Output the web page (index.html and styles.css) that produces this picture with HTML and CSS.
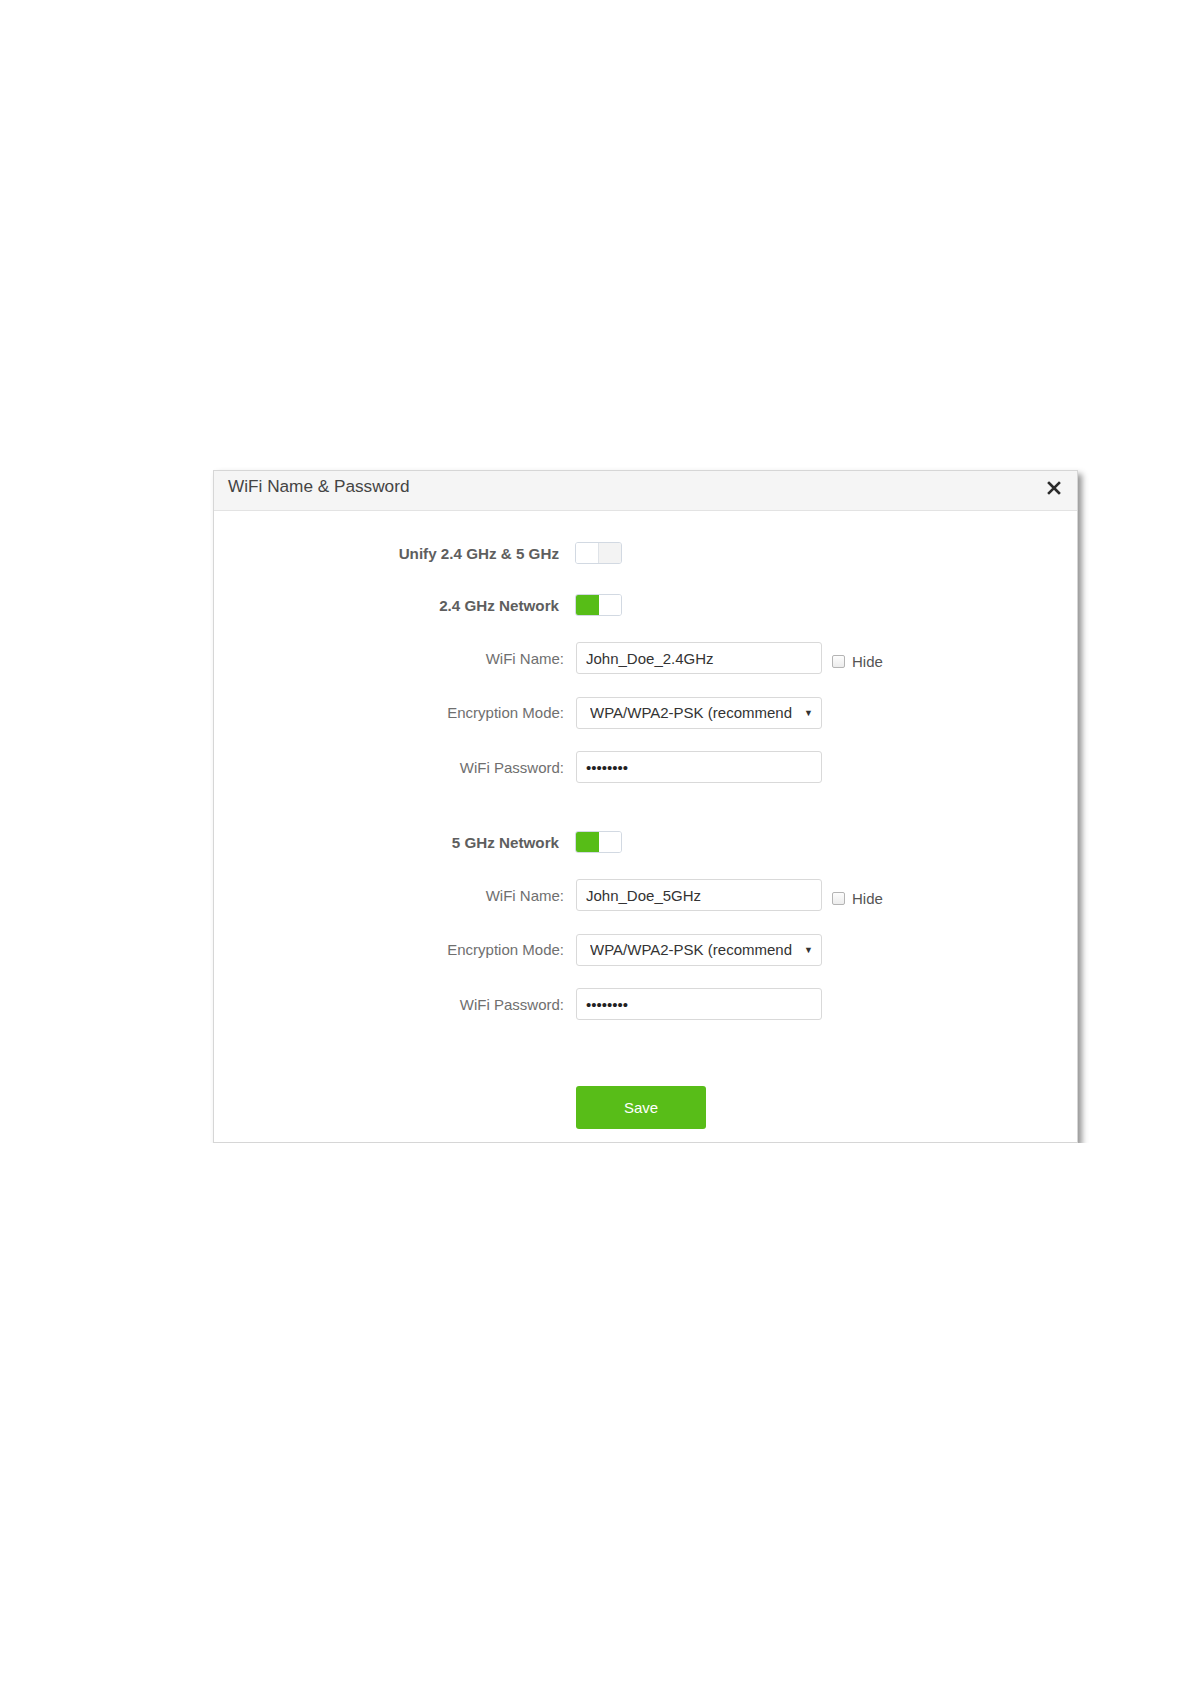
FILE: index.html
```html
<!DOCTYPE html>
<html>
<head>
<meta charset="utf-8">
<link rel="stylesheet" href="styles.css">
</head>
<body>
<div class="dialog">
  <div class="dialog-head">
    <span class="dialog-title">WiFi Name &amp; Password</span>
    <button class="close" type="button" aria-label="Close">
      <svg width="14" height="14" viewBox="0 0 14 14"><path d="M2 2 L12 12 M12 2 L2 12" stroke="#2b2b2b" stroke-width="2.6" stroke-linecap="square" fill="none"/></svg>
    </button>
  </div>
  <div class="dialog-body">
    <div class="row first">
      <label class="lbl bold">Unify 2.4 GHz &amp; 5 GHz</label>
      <span class="toggle off"><span class="half a"></span><span class="half b"></span></span>
    </div>
    <div class="row second">
      <label class="lbl bold">2.4 GHz Network</label>
      <span class="toggle on"><span class="half a"></span><span class="half b"></span></span>
    </div>
    <div class="row tight">
      <label class="lbl">WiFi Name:</label>
      <input class="field" type="text" value="John_Doe_2.4GHz">
      <label class="hide"><span class="cbox"></span>Hide</label>
    </div>
    <div class="row">
      <label class="lbl">Encryption Mode:</label>
      <div class="field select"><span class="sel-text">WPA/WPA2-PSK (recommend</span><span class="arrow">▼</span></div>
    </div>
    <div class="row">
      <label class="lbl">WiFi Password:</label>
      <input class="field pwd" type="text" value="••••••••">
    </div>

    <div class="row section">
      <label class="lbl bold">5 GHz Network</label>
      <span class="toggle on"><span class="half a"></span><span class="half b"></span></span>
    </div>
    <div class="row tight">
      <label class="lbl">WiFi Name:</label>
      <input class="field" type="text" value="John_Doe_5GHz">
      <label class="hide"><span class="cbox"></span>Hide</label>
    </div>
    <div class="row">
      <label class="lbl">Encryption Mode:</label>
      <div class="field select"><span class="sel-text">WPA/WPA2-PSK (recommend</span><span class="arrow">▼</span></div>
    </div>
    <div class="row">
      <label class="lbl">WiFi Password:</label>
      <input class="field pwd" type="text" value="••••••••">
    </div>

    <div class="actions">
      <button class="save" type="button">Save</button>
    </div>
  </div>
</div>
</body>
</html>
```

FILE: styles.css
```css
html, body {
  margin: 0;
  padding: 0;
  background: #ffffff;
}
body {
  font-family: "Liberation Sans", Arial, sans-serif;
  padding-top: 470px;
  padding-left: 213px;
}
.dialog {
  width: 863px;
  border: 1px solid #d6d6d6;
  background: #fff;
  box-shadow: 4px 4px 6px rgba(0, 0, 0, 0.42);
}
.dialog-head {
  height: 39px;
  background: #f5f5f5;
  border-bottom: 1px solid #e3e3e3;
  display: flex;
  align-items: center;
  justify-content: space-between;
  padding: 0 16px 0 14px;
}
.dialog-title {
  font-size: 17.2px;
  color: #444;
  margin-top: -8px;
}
.close {
  border: 0;
  background: transparent;
  padding: 0;
  display: flex;
  width: 14px;
  height: 14px;
  margin-top: -6px;
}
.dialog-body {
  padding: 26px 0 13px;
}
.row {
  display: flex;
  align-items: center;
  height: 32px;
  margin-top: 22.5px;
}
.row.first { margin-top: 0; }
.row.second { margin-top: 20px; }
.row.tight { margin-top: 21px; }
.row.section { margin-top: 43px; }
.lbl {
  width: 350px;
  text-align: right;
  font-size: 15px;
  color: #6f6f6f;
  flex: none;
}
.lbl.bold {
  font-weight: bold;
  color: #5e5e5e;
  font-size: 15.2px;
  padding-right: 5px;
  width: 345px;
}
.toggle {
  margin-left: 11px;
  width: 45px;
  height: 20px;
  border: 1px solid #d2d9e2;
  border-radius: 3px;
  display: flex;
  overflow: hidden;
  flex: none;
}
.toggle .half { flex: 1; }
.toggle.off .a { background: #fff; border-right: 1px solid #dfe3e8; }
.toggle.off .b { background: #f3f3f3; }
.toggle.on .a { background: #57bd17; }
.toggle.on .b { background: #fff; }
.field {
  box-sizing: border-box;
  margin: 0 0 0 12px;
  width: 246px;
  height: 32px;
  border: 1px solid #d9d9d9;
  border-radius: 3px;
  padding: 0 9px;
  font-family: "Liberation Sans", Arial, sans-serif;
  font-size: 15px;
  color: #333;
  background: #fff;
  outline: none;
  flex: none;
}
.pwd {
  color: #222;
}
.select {
  display: flex;
  align-items: center;
  justify-content: space-between;
  padding: 0 8px 0 13px;
}
.sel-text {
  white-space: nowrap;
  overflow: hidden;
}
.arrow {
  font-size: 9px;
  color: #333;
}
.hide {
  display: flex;
  align-items: center;
  margin-left: 10px;
  margin-top: 7px;
  font-size: 15px;
  color: #555;
}
.cbox {
  width: 11px;
  height: 11px;
  border: 1px solid #b4b4b4;
  border-radius: 2px;
  background: linear-gradient(#fdfdfd, #ececec);
  margin-right: 7px;
}
.actions {
  margin-top: 66px;
  padding-left: 362px;
}
.save {
  width: 130px;
  height: 43px;
  border: 0;
  border-radius: 3px;
  background: #58bd18;
  color: #fff;
  font-family: "Liberation Sans", Arial, sans-serif;
  font-size: 15px;
}
```
